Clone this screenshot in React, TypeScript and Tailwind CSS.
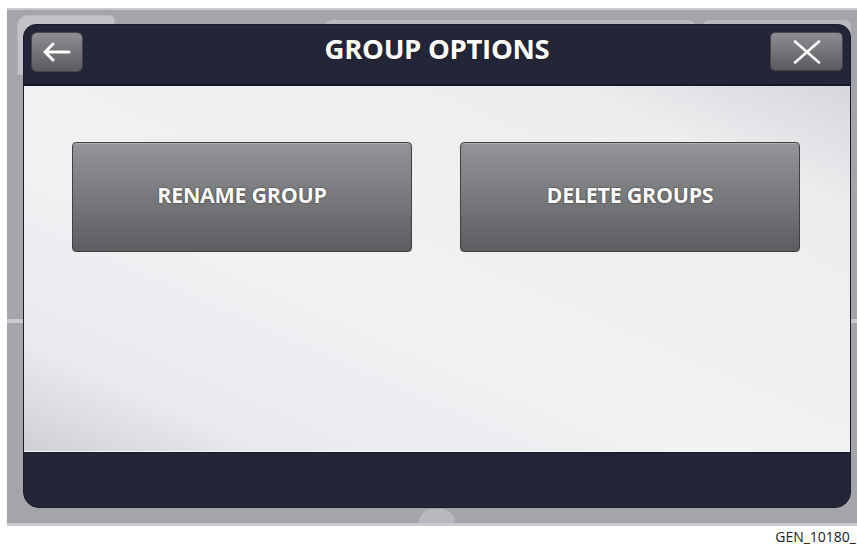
const options = ['RENAME GROUP', 'DELETE GROUPS'];

function OptionButton({ label }: { label: string }) {
  return (
    <button className="flex h-[110px] items-center justify-center rounded-[4px] border border-[#443f3f] bg-[linear-gradient(to_bottom,#939498_0%,#78797d_50%,#5d5d61_100%)] shadow-[inset_0_1px_0_rgba(255,255,255,0.25)]">
      <span className="pb-[4px] text-[21.5px] font-bold tracking-[-0.3px] text-white [text-shadow:0_0_2px_rgba(40,30,20,0.9)]">
        {label}
      </span>
    </button>
  );
}

export default function App() {
  return (
    <div className="relative h-[545px] w-[857px] overflow-hidden bg-white font-['Open_Sans',sans-serif]">
      {/* device frame */}
      <div className="relative ml-[7px] mt-[8px] h-[518px] w-[850px] border-b-[3px] border-t-2 border-[#c9cacd] bg-[#a4a5a8] pb-[15px] pl-[16px] pr-[6px] pt-[14px]">
        {/* tabs lying behind the dialog */}
        <div className="absolute left-[10px] top-[5px] h-[60px] w-[98px] rounded-tl-[10px] rounded-tr-[6px] border border-[#b5b6b9] bg-[#c2c3c6]" />
        <div className="absolute left-[319px] top-[10px] h-[40px] w-[369px] rounded-t-[6px] bg-[#b9babd]" />
        <div className="absolute left-[696px] top-[10px] h-[40px] w-[148px] rounded-t-[6px] bg-[#b9babd]" />
        <div className="absolute left-0 top-[309px] h-[4px] w-[16px] bg-[#c9cacd]" />
        <div className="absolute right-0 top-[309px] h-[4px] w-[6px] bg-[#c9cacd]" />
        <div className="absolute bottom-0 left-[412px] h-[14px] w-[36px] rounded-t-[18px] bg-[#b8b9bc]" />

        {/* dialog */}
        <div className="relative z-10 flex h-[484px] w-[828px] flex-col overflow-hidden rounded-t-[13px] rounded-b-[16px] border border-[#1a1c29] bg-[#232638]">
          <div className="grid h-[61px] shrink-0 grid-cols-[1fr_auto_1fr] items-start border-b-2 border-[#161827] px-[7px] pt-[7px]">
            <button className="flex h-[40px] w-[52px] items-center justify-center justify-self-start rounded-[6px] border border-[#4a4444] bg-[linear-gradient(to_bottom,#8d8e92,#5b5b5f)]">
              <svg width="28" height="22" viewBox="0 0 28 22" fill="none" stroke="white" strokeWidth="3" strokeLinecap="round" strokeLinejoin="round">
                <path d="M2 11H26M10 3L2 11L10 19" />
              </svg>
            </button>
            <h1 className="text-[27.5px] font-bold leading-[34px] tracking-[-0.3px] text-white [text-shadow:0_0_2px_rgba(40,30,20,0.9)]">
              GROUP OPTIONS
            </h1>
            <button className="flex h-[39px] w-[73px] items-center justify-center justify-self-end rounded-[5px] border border-[#4a4444] bg-[linear-gradient(to_bottom,#8d8e92,#5b5b5f)]">
              <svg width="28" height="24" viewBox="0 0 28 24" fill="none" stroke="white" strokeWidth="2.6" strokeLinecap="round">
                <path d="M2 1.5L26 22.5M26 1.5L2 22.5" />
              </svg>
            </button>
          </div>

          <div className="grid h-[366px] shrink-0 grid-cols-2 content-start gap-x-[48px] border-b border-[#f7f7f9] bg-[linear-gradient(to_bottom_left,#d6d7da_0%,#eceef0_18%,#f0f1f3_60%,#e9eaed_85%,#cfd0d4_100%)] pl-[48px] pr-[50px] pt-[56px]">
            {options.map((label) => (
              <OptionButton key={label} label={label} />
            ))}
          </div>

          <div className="flex-1 border-t border-[#15172a]" />
        </div>
      </div>

      <div className="mt-[2px] pr-[1px] text-right text-[14px] leading-[18px] text-[#222]">GEN_10180_</div>
    </div>
  );
}
